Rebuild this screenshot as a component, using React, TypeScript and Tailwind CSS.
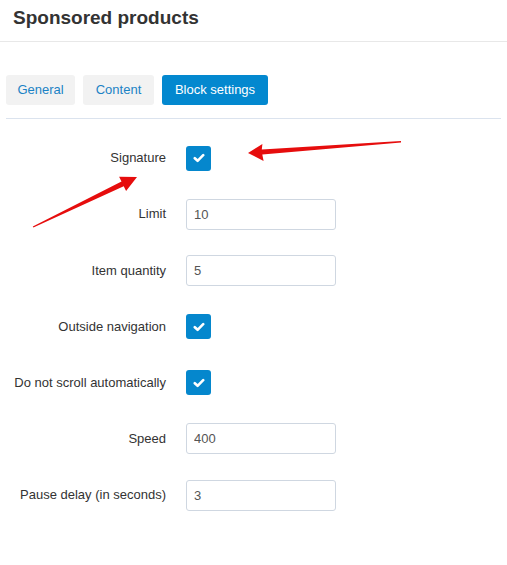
import React from "react"

const font = { fontFamily: '"Liberation Sans", Arial, sans-serif' }

type Row = { label: string; type: "check" | "input"; value?: string }

const rows: Row[] = [
    { label: "Signature", type: "check" },
    { label: "Limit", type: "input", value: "10" },
    { label: "Item quantity", type: "input", value: "5" },
    { label: "Outside navigation", type: "check" },
    { label: "Do not scroll automatically", type: "check" },
    { label: "Speed", type: "input", value: "400" },
    { label: "Pause delay (in seconds)", type: "input", value: "3" },
]

function Checkbox() {
    return (
        <div className="flex h-[25px] w-[25px] items-center justify-center rounded-[3px] bg-[#0587cd]">
            <svg width="12" height="10" viewBox="0 0 12 10">
                <path
                    d="M1.8 5.2 L4.6 7.8 L10.2 2.2"
                    fill="none"
                    stroke="#fff"
                    strokeWidth="2.6"
                    strokeLinecap="round"
                    strokeLinejoin="round"
                />
            </svg>
        </div>
    )
}

function Arrows() {
    return (
        <svg
            className="pointer-events-none absolute left-0 top-0"
            width="507"
            height="565"
            viewBox="0 0 507 565"
        >
            {/* arrow pointing at the checkbox */}
            <polygon
                fill="#e60d0d"
                points="248,153 262.4,143.9 261.8,149.6 401,141 401,142.6 262.3,154.6 263.6,160.9"
            />
            {/* arrow pointing at the label */}
            <polygon
                fill="#e60d0d"
                points="137,177 119.1,176.7 121.5,181.6 32.8,226.5 33.4,227.6 123.7,186.2 126.1,191.1"
            />
        </svg>
    )
}

export default function App() {
    return (
        <div className="relative h-[565px] w-[507px] bg-white" style={font}>
            {/* Header */}
            <div className="h-[42px] border-b border-[#e8e8e8] px-[13px]">
                <h1 className="text-[19px] font-bold leading-[35px] text-[#333]">
                    Sponsored products
                </h1>
            </div>

            {/* Tabs */}
            <div className="mx-[6px] flex gap-[8px] border-b border-[#dbe3ee] pb-[13px] pt-[33px]">
                <button className="h-[30px] w-[69px] rounded-[3px] bg-[#f2f2f2] text-[13px] text-[#1b82c5]">
                    General
                </button>
                <button className="h-[30px] w-[71px] rounded-[3px] bg-[#f2f2f2] text-[13px] text-[#1b82c5]">
                    Content
                </button>
                <button className="h-[30px] w-[106px] rounded-[3px] bg-[#0388cf] text-[13px] text-white">
                    Block settings
                </button>
            </div>

            {/* Settings form */}
            <div className="flex flex-col gap-[26.2px] pt-[24px]">
                {rows.map((row) => (
                    <div key={row.label} className="flex h-[30px] items-center gap-[20px]">
                        <label className="w-[166px] text-right text-[13px] text-[#333]">
                            {row.label}
                        </label>
                        {row.type === "check" ? (
                            <Checkbox />
                        ) : (
                            <input
                                readOnly
                                value={row.value}
                                className="h-[31px] w-[150px] rounded-[3px] border border-[#cfd7e1] bg-white pl-[7px] text-[13px] text-[#555] outline-none"
                                style={font}
                            />
                        )}
                    </div>
                ))}
            </div>

            <Arrows />
        </div>
    )
}
